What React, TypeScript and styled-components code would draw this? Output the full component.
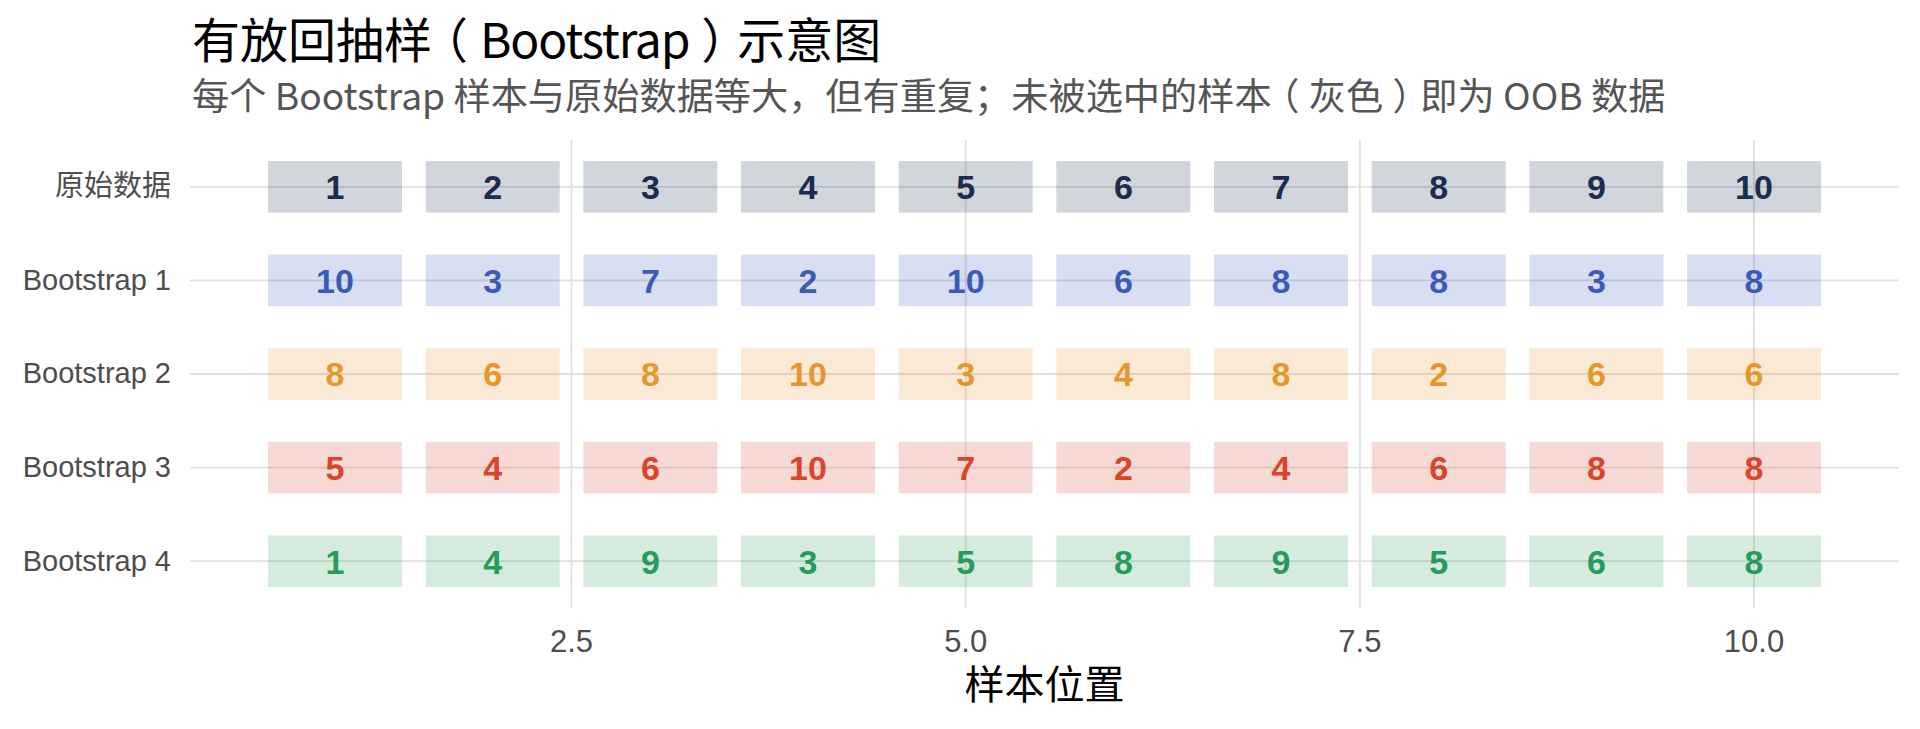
import React from "react";
import styled, { createGlobalStyle } from "styled-components";

const GlobalStyle = createGlobalStyle`
  html, body {
    margin: 0;
    padding: 0;
    background: #ffffff;
  }
`;

const CJK = `"Noto Sans CJK SC", "Noto Sans", sans-serif`;
const LATIN = `"Liberation Sans", "Noto Sans CJK SC", sans-serif`;

// panel geometry (px)
const PANEL_W = 1709;
const PANEL_H = 468;
const ROW_H = 93.6;
const X0 = 145; // centre of position 1
const UNIT = 157.67;
const TILE_W = 134;
const TILE_H = 51.5;

const rows = [
  { label: "原始数据", color: "#1b2c4e", values: [1, 2, 3, 4, 5, 6, 7, 8, 9, 10] },
  { label: "Bootstrap 1", color: "#3a5bb8", values: [10, 3, 7, 2, 10, 6, 8, 8, 3, 8] },
  { label: "Bootstrap 2", color: "#e5972b", values: [8, 6, 8, 10, 3, 4, 8, 2, 6, 6] },
  { label: "Bootstrap 3", color: "#d9442b", values: [5, 4, 6, 10, 7, 2, 4, 6, 8, 8] },
  { label: "Bootstrap 4", color: "#279b5c", values: [1, 4, 9, 3, 5, 8, 9, 5, 6, 8] },
];

const ticks = [2.5, 5.0, 7.5, 10.0];

const xPos = (v: number) => X0 + (v - 1) * UNIT;
const yPos = (i: number) => ROW_H / 2 + i * ROW_H;

const Page = styled.div`
  width: 1920px;
  height: 729px;
  overflow: hidden;
  background: #ffffff;
`;

const Header = styled.header`
  padding: 10px 0 0 192px;
`;

const Title = styled.h1`
  margin: 0;
  font: 400 48px/54px ${CJK};
  color: #000000;
  white-space: nowrap;
`;

const Subtitle = styled.p`
  margin: 8px 0 0;
  font: 400 37.2px/44px ${CJK};
  color: #555555;
  white-space: nowrap;
`;

// full-width bracket: half-width glyph, padded back to one em so it sits centred
const Paren = styled.span`
  font-feature-settings: "halt" 1;
  margin: 0 0.25em;
`;

const Latin = styled.span`
  letter-spacing: -0.025em;
`;

const Figure = styled.div`
  display: grid;
  grid-template-columns: 190px ${PANEL_W}px;
  margin-top: 24px;
`;

const YAxis = styled.div`
  display: flex;
  flex-direction: column;
  height: ${PANEL_H}px;
`;

const YLabel = styled.div`
  height: ${ROW_H}px;
  display: flex;
  align-items: center;
  justify-content: flex-end;
  padding-right: 19px;
  font: 400 29px/1 ${LATIN};
  color: #4d4d4d;
  white-space: nowrap;
`;

const Plot = styled.svg`
  display: block;
  overflow: visible;
`;

const AxisTitle = styled.div`
  grid-column: 2;
  text-align: center;
  font: 400 40px/44px ${CJK};
  color: #000000;
`;

const GRID = "#e0e0e0";

export default function App() {
  return (
    <Page>
      <GlobalStyle />
      <Header>
        <Title>
          有放回抽样<Paren>（</Paren>
          <Latin>Bootstrap</Latin>
          <Paren>）</Paren>示意图
        </Title>
        <Subtitle>
          每个 Bootstrap 样本与原始数据等大，但有重复；未被选中的样本<Paren>（</Paren>灰色
          <Paren>）</Paren>即为 OOB 数据
        </Subtitle>
      </Header>
      <Figure>
        <YAxis>
          {rows.map((r) => (
            <YLabel key={r.label}>{r.label}</YLabel>
          ))}
        </YAxis>
        <Plot width={PANEL_W} height={520} viewBox={`0 0 ${PANEL_W} 520`}>
          {rows.map((r, i) => (
            <line key={r.label} x1={0} x2={PANEL_W} y1={yPos(i)} y2={yPos(i)} stroke={GRID} strokeWidth={1.8} />
          ))}
          {ticks.map((t) => (
            <line key={t} x1={xPos(t)} x2={xPos(t)} y1={0} y2={PANEL_H} stroke={GRID} strokeWidth={1.8} />
          ))}
          {rows.map((r, i) =>
            r.values.map((v, j) => (
              <g key={`${i}-${j}`}>
                <rect
                  x={xPos(j + 1) - TILE_W / 2}
                  y={yPos(i) - TILE_H / 2}
                  width={TILE_W}
                  height={TILE_H}
                  fill={r.color}
                  fillOpacity={0.2}
                />
                <text
                  x={xPos(j + 1)}
                  y={yPos(i) + 12.3}
                  textAnchor="middle"
                  fontFamily="Liberation Sans, sans-serif"
                  fontWeight={700}
                  fontSize={34}
                  fill={r.color}
                >
                  {v}
                </text>
              </g>
            ))
          )}
          {ticks.map((t) => (
            <text
              key={t}
              x={xPos(t)}
              y={512}
              textAnchor="middle"
              fontFamily="Liberation Sans, sans-serif"
              fontSize={31}
              fill="#4d4d4d"
            >
              {t.toFixed(1)}
            </text>
          ))}
        </Plot>
        <AxisTitle>样本位置</AxisTitle>
      </Figure>
    </Page>
  );
}
